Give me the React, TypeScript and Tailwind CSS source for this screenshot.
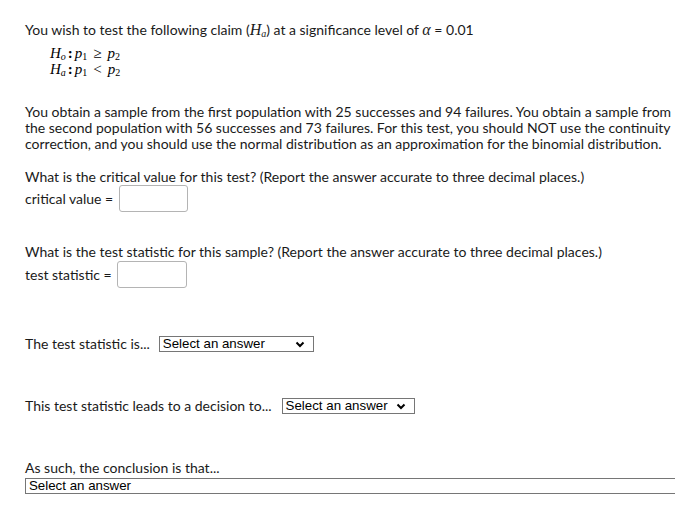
const Select = ({ width }: { width: string }) => (
    <span
        className={`inline-flex h-[16px] shrink-0 items-center justify-between border border-[#767676] bg-white pl-[3px] pr-[8px] align-middle text-[13.3px] text-black ${width}`}
        style={{ fontFamily: '"Liberation Sans", Arial, sans-serif' }}
    >
        <span className="leading-none">Select an answer</span>
        <svg width="10" height="7" viewBox="0 0 10 7">
            <path d="M1.5 1.5 L5 5 L8.5 1.5" fill="none" stroke="#000" strokeWidth="2" />
        </svg>
    </span>
);

const Box = ({ width }: { width: string }) => (
    <span
        className={`inline-block h-[27px] rounded-[3px] border border-[#b4b4b4] bg-white align-middle ${width}`}
    />
);

const M = ({ children }: { children: React.ReactNode }) => (
    <span
        className="italic"
        style={{ fontFamily: '"Liberation Serif", "DejaVu Serif", serif' }}
    >
        {children}
    </span>
);

// subscript that doesn't stretch the line box
const Sub = ({ children, italic }: { children: React.ReactNode; italic?: boolean }) => (
    <span
        className={`relative top-[2px] text-[10px] leading-none ${italic ? "italic" : ""}`}
        style={{ fontFamily: '"Liberation Serif", "DejaVu Serif", serif' }}
    >
        {children}
    </span>
);

export default function App() {
    return (
        <div
            className="min-h-[506px] w-[675px] overflow-hidden bg-white pl-[25px] pt-[22px] text-[14px] leading-[16px] text-[#1a1a1a]"
            style={{ fontFamily: 'Lato, "Open Sans", sans-serif' }}
        >
            <p>
                You wish to test the following claim (
                <M>
                    <span className="text-[16px] leading-none">H</span>
                    <Sub italic>a</Sub>
                </M>
                ) at a significance level of <M><span className="text-[16px] leading-none">α</span></M> = 0.01
            </p>

            <div
                className="mt-[6px] flex flex-col pl-[25px] text-[15px] leading-[16px] text-black"
                style={{ fontFamily: '"Liberation Serif", serif' }}
            >
                <div className="flex items-baseline">
                    <M>H</M>
                    <Sub italic>o</Sub>
                    <span className="px-[2px] font-bold">:</span>
                    <M>p</M>
                    <Sub>1</Sub>
                    <span className="px-[6px]">≥</span>
                    <M>p</M>
                    <Sub>2</Sub>
                </div>
                <div className="flex items-baseline">
                    <M>H</M>
                    <Sub italic>a</Sub>
                    <span className="px-[2px] font-bold">:</span>
                    <M>p</M>
                    <Sub>1</Sub>
                    <span className="px-[6px]">&lt;</span>
                    <M>p</M>
                    <Sub>2</Sub>
                </div>
            </div>

            <p className="mt-[27px]">
                You obtain a sample from the first population with 25 successes and 94 failures. You
                obtain a sample from the second population with 56 successes and 73 failures. For this
                test, you should NOT use the continuity correction, and you should use the normal
                distribution as an approximation for the binomial distribution.
            </p>

            <p className="mt-[17px]">
                What is the critical value for this test? (Report the answer accurate to three decimal
                places.)
            </p>
            <div className="flex items-center gap-[6px]">
                critical value = <Box width="w-[69px]" />
            </div>

            <p className="mt-[32px]">
                What is the test statistic for this sample? (Report the answer accurate to three
                decimal places.)
            </p>
            <div className="mt-[1px] flex items-center gap-[5px]">
                test statistic = <Box width="w-[70px]" />
            </div>

            <div className="mt-[48px] flex items-center gap-[9px]">
                The test statistic is... <Select width="w-[155px]" />
            </div>

            <div className="mt-[46px] flex items-center gap-[10px]">
                This test statistic leads to a decision to... <Select width="w-[133px]" />
            </div>

            <p className="mt-[46px]">As such, the conclusion is that...</p>
            <div className="mt-[2px] flex">
                <Select width="w-[720px]" />
            </div>
        </div>
    );
}
